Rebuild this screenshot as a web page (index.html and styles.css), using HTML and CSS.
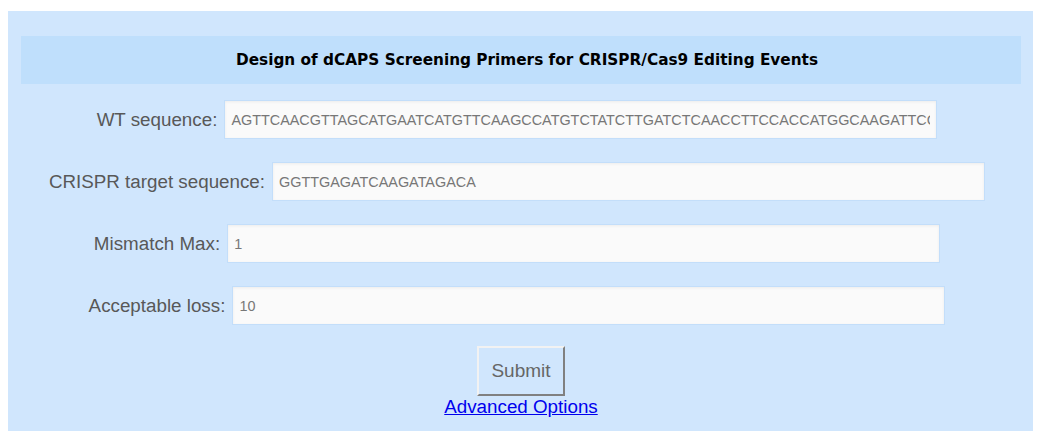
FILE: index.html
```html
<!DOCTYPE html>
<html>
<head>
<meta charset="utf-8">
<link rel="stylesheet" href="styles.css">
</head>
<body>
<div class="panel">
  <div class="header">Design of dCAPS Screening Primers for CRISPR/Cas9 Editing Events</div>
  <form class="form">
    <div class="row">
      <label class="lbl">WT sequence:</label>
      <input class="field" type="text" value="AGTTCAACGTTAGCATGAATCATGTTCAAGCCATGTCTATCTTGATCTCAACCTTCCACCATGGCAAGATTCGATGGTACCAAGGCTTCA">
    </div>
    <div class="row">
      <label class="lbl">CRISPR target sequence:</label>
      <input class="field" type="text" value="GGTTGAGATCAAGATAGACA">
    </div>
    <div class="row">
      <label class="lbl">Mismatch Max:</label>
      <input class="field" type="text" value="1">
    </div>
    <div class="row">
      <label class="lbl">Acceptable loss:</label>
      <input class="field" type="text" value="10">
    </div>
    <div class="actions">
      <button class="submit" type="button">Submit</button>
      <a class="adv" href="#">Advanced Options</a>
    </div>
  </form>
</div>
</body>
</html>
```

FILE: styles.css
```css
html, body {
  background: #ffffff;
}
body {
  margin: 8px;
  font-family: "Liberation Sans", Arial, sans-serif;
}
.panel {
  margin-top: 3px;
  margin-right: 1px;
  background: #d0e6fd;
  padding: 25px 12px 0 13px;
  height: 420px;
  box-sizing: border-box;
}
.header {
  background: #bfdffc;
  height: 48px;
  display: flex;
  align-items: center;
  justify-content: center;
  padding-left: 12px;
  font-family: "DejaVu Sans", sans-serif;
  font-weight: bold;
  font-size: 15.3px;
  color: #000;
}
.form {
  display: flex;
  flex-direction: column;
  padding-top: 16px;
}
.row {
  display: flex;
  justify-content: center;
  align-items: center;
  gap: 7px;
  height: 39px;
  margin-bottom: 23px;
  padding-right: 8px;
}
.lbl {
  font-size: 18.8px;
  color: #585858;
}
.field {
  width: 713px;
  height: 39px;
  box-sizing: border-box;
  border: 1px solid #c3defa;
  background: #fafafa;
  box-shadow: inset 0 1px 3px rgba(0,0,0,0.06);
  font-family: "Liberation Sans", Arial, sans-serif;
  font-size: 14.4px;
  color: #777777;
  padding: 0 6px;
  margin: 0;
  outline: none;
}
.actions {
  display: flex;
  flex-direction: column;
  align-items: center;
  margin-top: -2px;
}
.submit {
  width: 88px;
  height: 50px;
  background: #d0e6fd;
  border: 2px solid;
  border-color: #f2f2f2 #808080 #808080 #f2f2f2;
  font-family: "Liberation Sans", Arial, sans-serif;
  font-size: 19px;
  color: #666;
  padding: 0;
  margin: 0;
}
.adv {
  font-size: 18.8px;
  color: #0000ee;
  text-decoration: underline;
  line-height: 22px;
}
```
